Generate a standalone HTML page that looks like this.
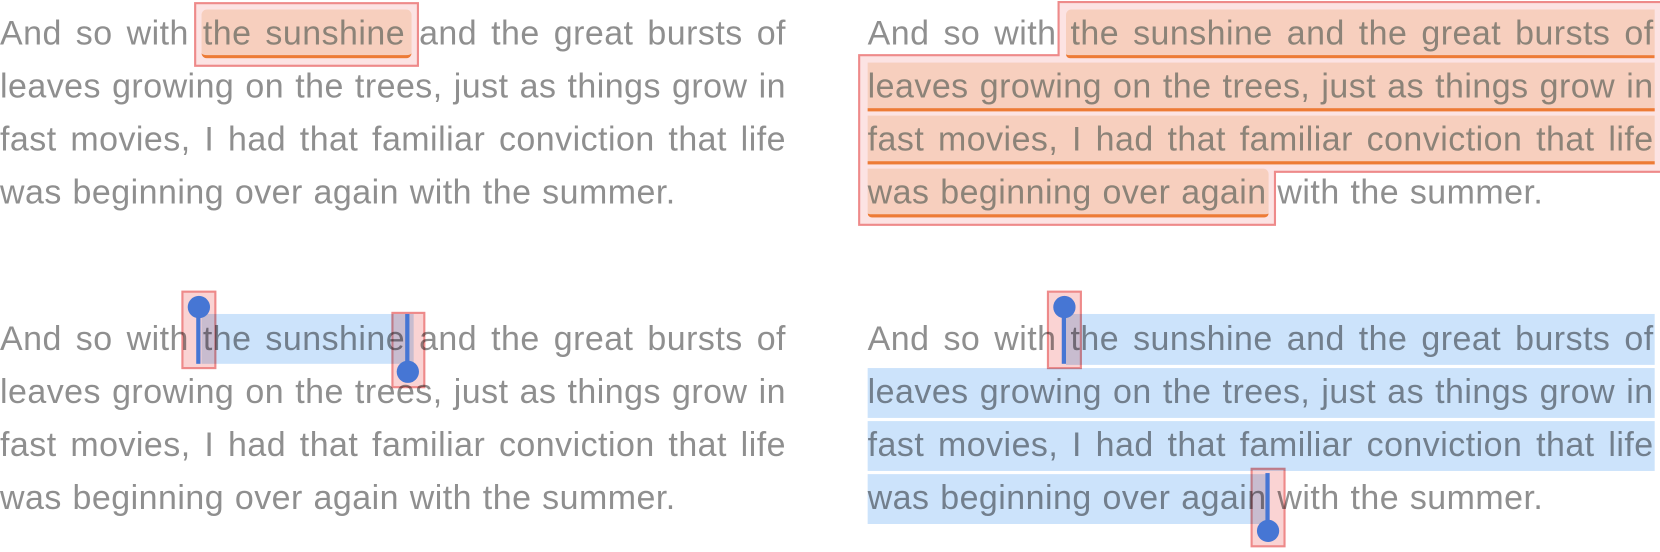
<!DOCTYPE html>
<html><head><meta charset="utf-8"><style>
html,body{margin:0;padding:0;background:#fff;width:1660px;height:552px;overflow:hidden}
#c{position:absolute;left:0;top:0;width:1565px;height:520px;transform:scale(1.0607);transform-origin:0 0}
.l{position:absolute;height:50px;line-height:50px;font-family:"Liberation Sans",sans-serif;font-size:32px;letter-spacing:0.45px;color:#8f8f8f;text-align:justify;text-align-last:justify;white-space:nowrap;overflow:visible}
.b{position:absolute}
.hl{position:absolute;background:#fae9d6;border-bottom:3px solid #f08a3c;border-radius:0 0 4px 4px;mix-blend-mode:multiply}
.sel{position:absolute;background:#cce3fb;mix-blend-mode:multiply}
.hb{position:absolute;background:rgba(240,130,130,.35);border:2px solid #ee8a8a;box-sizing:border-box;mix-blend-mode:multiply}
.st{position:absolute;width:4px;background:#4676d4}
.dot{position:absolute;width:21px;height:21px;border-radius:50%;background:#4676d4}
</style></head><body><div id="c">

<div class="b" style="left:183px;top:2px;width:212px;height:61px;background:#fce3e3;border:2px solid #ee8a8a;box-sizing:border-box"></div>
<svg class="b" style="left:0;top:0" width="1565" height="260"><polygon points="998,2 1566,2 1566,162 1202,162 1202,212 810,212 810,52 998,52" fill="#fce3e3" stroke="#ee8a8a" stroke-width="2"/></svg>

<div class="l" style="left:0;top:6px;width:741px">And so with the sunshine and the great bursts of</div>
<div class="l" style="left:0;top:56px;width:741px">leaves growing on the trees, just as things grow in</div>
<div class="l" style="left:0;top:106px;width:741px">fast movies, I had that familiar conviction that life</div>
<div class="l" style="left:0;top:156px;width:637px">was beginning over again with the summer.</div>

<div class="l" style="left:818px;top:6px;width:741px">And so with the sunshine and the great bursts of</div>
<div class="l" style="left:818px;top:56px;width:741px">leaves growing on the trees, just as things grow in</div>
<div class="l" style="left:818px;top:106px;width:741px">fast movies, I had that familiar conviction that life</div>
<div class="l" style="left:818px;top:156px;width:637px">was beginning over again with the summer.</div>

<div class="l" style="left:0;top:294px;width:741px">And so with the sunshine and the great bursts of</div>
<div class="l" style="left:0;top:344px;width:741px">leaves growing on the trees, just as things grow in</div>
<div class="l" style="left:0;top:394px;width:741px">fast movies, I had that familiar conviction that life</div>
<div class="l" style="left:0;top:444px;width:637px">was beginning over again with the summer.</div>

<div class="l" style="left:818px;top:294px;width:741px">And so with the sunshine and the great bursts of</div>
<div class="l" style="left:818px;top:344px;width:741px">leaves growing on the trees, just as things grow in</div>
<div class="l" style="left:818px;top:394px;width:741px">fast movies, I had that familiar conviction that life</div>
<div class="l" style="left:818px;top:444px;width:637px">was beginning over again with the summer.</div>

<div class="hl" style="left:190px;top:9px;width:198px;height:43px;border-radius:5px"></div>
<div class="hl" style="left:1005px;top:9px;width:555px;height:43px;border-radius:5px 0 0 4px"></div>
<div class="hl" style="left:818px;top:59px;width:742px;height:43px;border-radius:0"></div>
<div class="hl" style="left:818px;top:109px;width:742px;height:43px;border-radius:0"></div>
<div class="hl" style="left:818px;top:159px;width:378px;height:43px;border-radius:0 5px 4px 4px"></div>

<div class="sel" style="left:190px;top:296px;width:200px;height:47px"></div>
<div class="sel" style="left:1005px;top:296px;width:555px;height:48px"></div>
<div class="sel" style="left:818px;top:347px;width:742px;height:47px"></div>
<div class="sel" style="left:818px;top:397px;width:742px;height:47px"></div>
<div class="sel" style="left:818px;top:447px;width:378px;height:47px"></div>

<div class="hb" style="left:171px;top:274px;width:33px;height:74px"></div>
<div class="st" style="left:185px;top:290px;height:53px"></div>
<div class="dot" style="left:177px;top:279px"></div>
<div class="hb" style="left:369px;top:294px;width:32px;height:72px"></div>
<div class="st" style="left:382px;top:296px;height:54px"></div>
<div class="dot" style="left:374px;top:340px"></div>

<div class="hb" style="left:987px;top:274px;width:33px;height:74px"></div>
<div class="st" style="left:1001px;top:290px;height:53px"></div>
<div class="dot" style="left:993px;top:279px"></div>
<div class="hb" style="left:1179px;top:441px;width:33px;height:75px"></div>
<div class="st" style="left:1193px;top:446px;height:54px"></div>
<div class="dot" style="left:1185px;top:490px"></div>

</div></body></html>
